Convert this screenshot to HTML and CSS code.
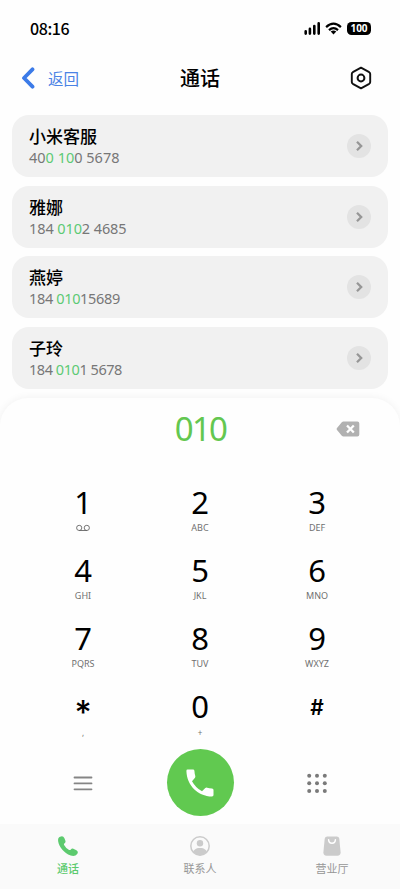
FILE: index.html
```html
<!DOCTYPE html>
<html lang="zh-CN">
<head>
<meta charset="utf-8">
<meta name="viewport" content="width=device-width, initial-scale=1">
<title>通话</title>
<link rel="stylesheet" href="styles.css">
</head>
<body>
<div class="phone">
  <div class="status">
    <span class="time">08:16</span>
    <svg class="signal" viewBox="0 0 17 13" width="17" height="13"><path d="M1.700 9.400v2.200M5.900 6.900v4.700M10.300 4v7.600M14.700 1.400v10.200" stroke="#000" stroke-width="2.600" stroke-linecap="round"/></svg>
    <svg class="wifi" viewBox="0 0 17 13" width="17" height="13"><path d="M1.100 5.100Q8.500-1.700 15.900 5.100M4 8.100Q8.500 4 13 8.100" fill="none" stroke="#000" stroke-width="2.200"/><path d="M5.700 9.600Q8.500 7.500 11.300 9.600L8.500 12.400Z"/></svg>
    <span class="battery">100</span>
  </div>
  <header class="header">
    <a class="back"><svg viewBox="0 0 14 22" width="14" height="22"><path d="M11.500 2.300L3 11l8.500 8.700" fill="none" stroke="#3c7be8" stroke-width="3.800" stroke-linecap="round" stroke-linejoin="round"/></svg><span>返回</span></a>
    <h1>通话</h1>
    <svg class="settings" viewBox="0 0 22 24" width="22" height="24"><path d="M11 1.700l8.200 4.500q1 .6 1 1.700v8.200q0 1.100-1 1.700L11 22.300l-8.200-4.500q-1-.6-1-1.700V7.900q0-1.100 1-1.700Z" fill="none" stroke="#111" stroke-width="1.900" stroke-linejoin="round"/><circle cx="11" cy="12" r="3.400" fill="none" stroke="#111" stroke-width="2"/></svg>
  </header>
  <main class="list">
    <div class="card"><div><div class="name">小米客服</div><div class="num n1">40<b>0 10</b>0 5678</div></div><span class="go"><svg viewBox="0 0 24 24" width="24" height="24"><path d="M10 7.800l4.200 4.200-4.200 4.200"/></svg></span></div>
    <div class="card"><div><div class="name">雅娜</div><div class="num n2">184 <b>010</b>2 4685</div></div><span class="go"><svg viewBox="0 0 24 24" width="24" height="24"><path d="M10 7.800l4.200 4.200-4.200 4.200"/></svg></span></div>
    <div class="card"><div><div class="name">燕婷</div><div class="num n3">184 <b>010</b>15689</div></div><span class="go"><svg viewBox="0 0 24 24" width="24" height="24"><path d="M10 7.800l4.200 4.200-4.200 4.200"/></svg></span></div>
    <div class="card"><div><div class="name">子玲</div><div class="num n4">184 <b>010</b>1 5678</div></div><span class="go"><svg viewBox="0 0 24 24" width="24" height="24"><path d="M10 7.800l4.200 4.200-4.200 4.200"/></svg></span></div>
  </main>
  <section class="dialer">
    <div class="entry"><span class="typed">010</span><svg class="erase" viewBox="0 0 24 16" width="24" height="16"><path d="M7.500.5h13.800q2 0 2 2v11q0 2-2 2H7.500q-1 0-1.700-.8L1 9q-.9-1 0-2L5.800 1.300Q6.500.5 7.500.5Z" fill="#b1b1b1"/><path d="M11 4.500l6.800 7M17.800 4.500l-6.800 7" stroke="#fff" stroke-width="2.300"/></svg></div>
    <div class="keys">
      <div class="key"><span class="digit">1</span><span class="sub"><svg viewBox="0 0 16 8" width="16" height="8"><path d="M4 6.500H12" fill="none" stroke="#666" stroke-width=".9"/><circle cx="4.200" cy="3.900" r="2.600" fill="none" stroke="#666" stroke-width=".9"/><circle cx="11.800" cy="3.900" r="2.600" fill="none" stroke="#666" stroke-width=".9"/></svg></span></div>
      <div class="key"><span class="digit">2</span><span class="sub">ABC</span></div>
      <div class="key"><span class="digit">3</span><span class="sub">DEF</span></div>
      <div class="key"><span class="digit">4</span><span class="sub">GHI</span></div>
      <div class="key"><span class="digit">5</span><span class="sub">JKL</span></div>
      <div class="key"><span class="digit">6</span><span class="sub">MNO</span></div>
      <div class="key"><span class="digit">7</span><span class="sub">PQRS</span></div>
      <div class="key"><span class="digit">8</span><span class="sub">TUV</span></div>
      <div class="key"><span class="digit">9</span><span class="sub">WXYZ</span></div>
      <div class="key"><span class="digit star">*</span><span class="sub low">,</span></div>
      <div class="key"><span class="digit">0</span><span class="sub low">+</span></div>
      <div class="key"><span class="digit hash">#</span></div>
    </div>
    <div class="actions">
      <svg viewBox="0 0 20 16" width="20" height="16"><path d="M1.500 2.500h17M1.500 8.400h17M1.500 14.300h17" stroke="#858585" stroke-width="1.800" stroke-linecap="round"/></svg>
      <span class="call"><svg viewBox="0 0 28 28" width="28" height="28"><path d="M1.500.5H7q1.300 0 1.400 1.300.2 3 .9 5.200.3 1-.5 1.900L6 12.200Q9.800 19 16 22.300l3.300-3.200q.8-.7 1.800-.4 2.200.8 4.900.8 1.500.1 1.500 1.500v5.100q0 1.400-1.500 1.400C12 27 1 17 .4 1.900Q.4.500 1.500.5Z" fill="#fff"/></svg></span>
      <svg viewBox="0 0 20 20" width="20" height="20" fill="#7a7a7a"><circle cx="2.200" cy="2.700" r="2"/><circle cx="10" cy="2.700" r="2"/><circle cx="17.800" cy="2.700" r="2"/><circle cx="2.200" cy="10.300" r="2"/><circle cx="10" cy="10.300" r="2"/><circle cx="17.800" cy="10.300" r="2"/><circle cx="2.200" cy="17.900" r="2"/><circle cx="10" cy="17.900" r="2"/><circle cx="17.800" cy="17.900" r="2"/></svg>
    </div>
  </section>
  <nav class="tabs">
    <div class="tab active"><svg viewBox="0 0 20 20" width="20" height="20"><path d="M2 .8Q5-.8 6.300 2l1.100 2.700q.5 1.500-.8 2.500-1 .8-.5 1.900 2 3.700 5 4.900 1 .3 1.800-.6 1-1.200 2.500-.6l3 1.400q2.400 1.300.8 3.700-2.200 3-6.500 1.600C5.800 17 1 10.500.2 5.500-.2 2.500.5 1.600 2 .8Z" fill="#5cca6e"/></svg><span>通话</span></div>
    <div class="tab"><svg viewBox="0 0 20 20" width="20" height="20"><circle cx="10" cy="10" r="9.200" fill="none" stroke="#cbcbcb" stroke-width="1.500"/><circle cx="10" cy="7.300" r="3.200" fill="#cbcbcb"/><path d="M3 15.500Q5.500 12 8.500 12h3q3 0 5.500 3.500Q13.800 19.300 10 19.300T3 15.500Z" fill="#cbcbcb"/></svg><span>联系人</span></div>
    <div class="tab"><svg viewBox="0 0 20 20" width="20" height="20"><path d="M5.300.4h9.400q2.300 0 2.600 2.400l1.300 13.500q.1 3.400-3.200 3.400H4.600q-3.300 0-3.200-3.400L2.700 2.800Q3 .4 5.300.4Z" fill="#cbcbcb"/><path d="M6.600 3.800q.2 3.500 3.400 3.500t3.400-3.500" fill="none" stroke="#fff" stroke-width="1.500" stroke-linecap="round"/></svg><span>营业厅</span></div>
  </nav>
</div>
</body>
</html>
```
FILE: styles.css
```css
* { box-sizing: border-box; }
body { margin: 0; background: #fefefe; font-family: "Noto Sans CJK SC", sans-serif; color: #000; }
svg { display: block; flex: none; }
.phone { width: 400px; height: 889px; display: flex; flex-direction: column; overflow: hidden; }
.status { height: 56px; padding: 0 29px 0 30px; display: flex; align-items: center; flex: none; }
.time { font: 500 16px/20px "Noto Sans CJK SC", sans-serif; letter-spacing: -.4px; margin-right: auto; }
.wifi { margin: 0 5px 0 4px; }
.battery { width: 24px; height: 13px; border-radius: 4.5px; background: #000; color: #fff; font: 700 10px/13px "Noto Sans", sans-serif; text-align: center; }
.header { height: 44px; padding: 0 28px 0 21px; display: grid; grid-template-columns: 1fr auto 1fr; align-items: center; flex: none; }
.back { display: flex; align-items: center; gap: 13px; color: #4b83e5; font-size: 15.5px; line-height: 24px; }
h1 { margin: 0 0 0 7px; font-size: 20px; line-height: 28px; font-weight: 500; }
.settings { justify-self: end; }
.list { padding: 15px 12.5px 0 12px; display: flex; flex-direction: column; gap: 8.5px; height: 298px; flex: none; }
.card { height: 62px; flex: none; border-radius: 17px; background: #f1f1f1; padding: 0 17px; display: flex; align-items: center; justify-content: space-between; }
.name { font-size: 17px; line-height: 22px; font-weight: 500; }
.num { font: 400 14.5px/20px "Noto Sans", sans-serif; color: #777; white-space: pre; }
.num b { font-weight: 400; color: #5cca74; }
.n2 { letter-spacing: -.1px; }
.n3 { letter-spacing: -.35px; }
.n4 { letter-spacing: -.45px; }
.go { width: 24px; height: 24px; border-radius: 50%; background: #e3e3e3; }
.go path { fill: none; stroke: #969696; stroke-width: 2.3; }
.dialer { height: 426px; flex: none; background: #fefefe; border-radius: 28px 28px 0 0; box-shadow: 0 0 8px rgba(0,0,0,.06); }
.entry { height: 62px; display: grid; grid-template-columns: 1fr auto 1fr; align-items: center; padding: 0 40px; }
.typed { grid-column: 2; font: 400 33px/40px "Noto Sans", sans-serif; letter-spacing: -1.7px; padding-left: 1px; color: #63c750; }
.erase { justify-self: end; }
.keys { padding: 21.5px 24.5px 0; display: grid; grid-template-columns: repeat(3, 117px); grid-auto-rows: 68px; }
.key { display: flex; flex-direction: column; align-items: center; }
.digit { height: 40px; font: 400 31px/40px "Noto Sans", sans-serif; }
.star { font: 500 33px/53px Inter, sans-serif; }
.hash { font: 600 21px/43px Inter, sans-serif; }
.sub { height: 12px; font: 400 9px/12px "Noto Sans", sans-serif; color: #707070; display: flex; align-items: center; }
.low { margin-top: 1px; font-size: 8px; }
.actions { height: 58px; padding: 0 24.5px; display: grid; grid-template-columns: repeat(3, 117px); grid-template-rows: 58px; justify-items: center; align-items: center; }
.call { width: 67px; height: 67px; border-radius: 50%; background: #61c950; display: grid; place-items: center; }
.tabs { height: 65px; flex: none; background: #fafafa; display: grid; grid-template-columns: repeat(3, 132px); padding: 12px 2px 0; }
.tab { display: flex; flex-direction: column; align-items: center; gap: 4px; font-size: 11px; line-height: 16px; color: #969696; }
.active { color: #5cca6e; font-weight: 500; }
```
